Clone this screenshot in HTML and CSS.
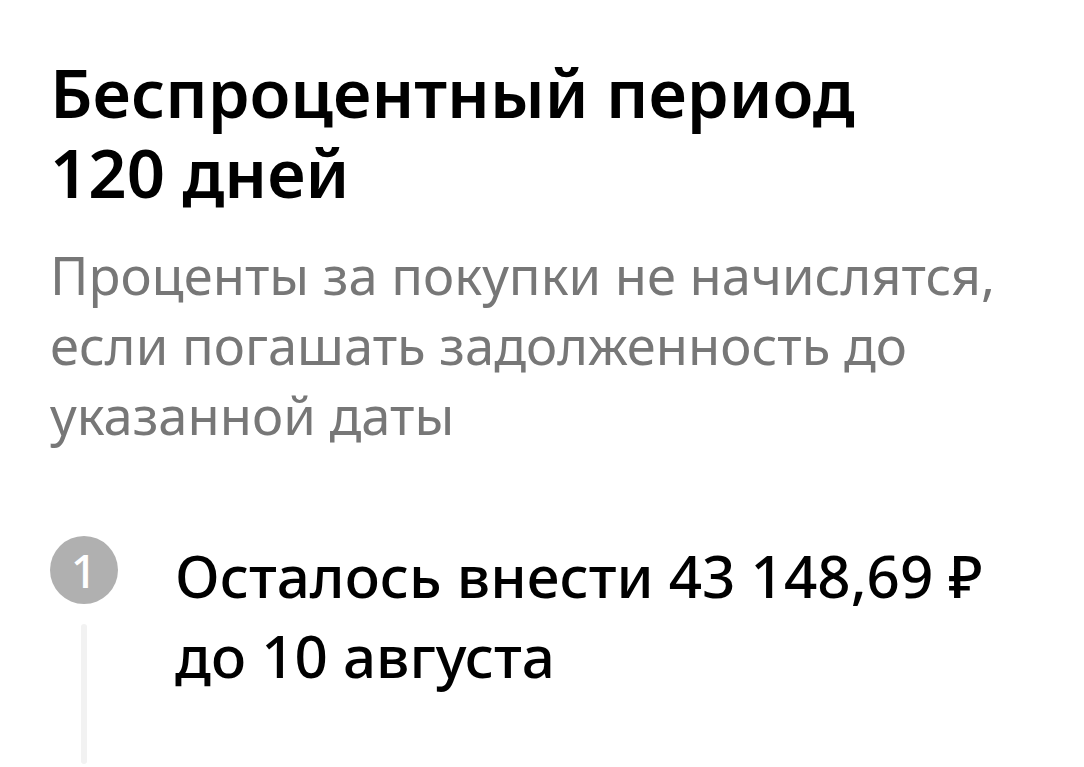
FILE: index.html
```html
<!DOCTYPE html>
<html lang="ru">
<head>
  <meta charset="UTF-8">
  <title>Беспроцентный период</title>
  <link rel="stylesheet" href="styles.css">
</head>
<body>

  <div class="card">
    <h1 class="title">Беспроцентный период<br>120 дней</h1>
    <p class="note">Проценты за покупки не начислятся, если погашать задолженность до указанной даты</p>

    <div class="steps">
      <div class="step">
        <div class="step-mark">
          <div class="step-num">1</div>
          <div class="step-line"></div>
        </div>
        <div class="step-text">Осталось внести 43&nbsp;148,69&nbsp;₽ до 10 августа</div>
      </div>
    </div>
  </div>

</body>
</html>
```

FILE: styles.css
```css
body {
  margin: 0;
  background: #ffffff;
  font-family: "Noto Sans", Arial, sans-serif;
  color: #000000;
}

.card {
  padding: 52px 50px 0 50px;
}

.title {
  margin: 0;
  font-size: 67px;
  font-weight: 600;
  line-height: 80px;
}

.note {
  margin: 28px 0 0 0;
  width: 980px;
  font-size: 52.5px;
  line-height: 70px;
  color: #777777;
}

.steps {
  margin-top: 86px;
}

.step {
  display: flex;
  gap: 57px;
}

.step-mark {
  display: flex;
  flex-direction: column;
  align-items: center;
  width: 68px;
}

.step-num {
  width: 68px;
  height: 68px;
  border-radius: 50%;
  background: #b0b0b0;
  color: #ffffff;
  font-size: 46px;
  font-weight: 500;
  line-height: 68px;
  text-align: center;
}

.step-line {
  width: 6px;
  height: 140px;
  margin-top: 20px;
  background: #f2f2f2;
  border-radius: 3px;
}

.step-text {
  width: 840px;
  font-size: 58.3px;
  line-height: 80px;
  font-weight: 500;
}
```
